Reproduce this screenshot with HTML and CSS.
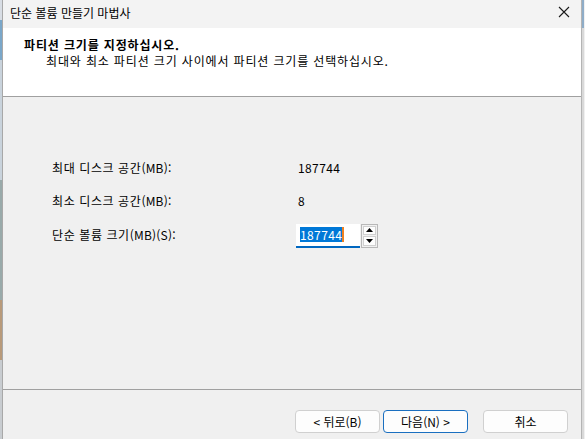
FILE: index.html
```html
<!DOCTYPE html>
<html lang="ko">
<head>
<meta charset="utf-8">
<link rel="stylesheet" href="styles.css">
</head>
<body>
<div class="screen">
  <div class="edge-left"></div>
  <div class="window">
    <div class="titlebar">
      <span class="title">단순 볼륨 만들기 마법사</span>
      <svg class="close" width="12" height="12" viewBox="0 0 12 12"><path d="M1 1 L11 11 M11 1 L1 11" stroke="#1a1a1a" stroke-width="1.1" fill="none"/></svg>
    </div>
    <div class="header">
      <div class="h-title">파티션 크기를 지정하십시오.</div>
      <div class="h-sub">최대와 최소 파티션 크기 사이에서 파티션 크기를 선택하십시오.</div>
    </div>
    <div class="content">
      <div class="grid">
        <div class="label">최대 디스크 공간<span class="lat">(MB):</span></div>
        <div class="value">187744</div>
        <div class="label">최소 디스크 공간<span class="lat">(MB):</span></div>
        <div class="value">8</div>
        <div class="label">단순 볼륨 크기<span class="lat">(MB)(S):</span></div>
        <div class="spin">
          <div class="field"><span class="sel">187744</span><span class="caret"></span></div>
          <div class="arrows">
            <div class="arrow"><svg width="7" height="4" viewBox="0 0 7 4"><path d="M0 4 L3.5 0 L7 4Z" fill="#000"/></svg></div>
            <div class="arrow"><svg width="7" height="4" viewBox="0 0 7 4"><path d="M0 0 L3.5 4 L7 0Z" fill="#000"/></svg></div>
          </div>
        </div>
      </div>
    </div>
    <div class="footer">
      <button class="btn">&lt; 뒤로(B)</button>
      <button class="btn primary">다음(N) &gt;</button>
      <button class="btn cancel">취소</button>
    </div>
  </div>
  <div class="edge-right"></div>
</div>
</body>
</html>
```
FILE: styles.css
```css
* { box-sizing: border-box; }
html, body { margin: 0; padding: 0; }
body {
  width: 585px;
  height: 439px;
  overflow: hidden;
  font-family: "Noto Sans CJK KR", "Noto Sans", sans-serif;
  font-size: 12px;
  color: #000;
  background: #f0f0f0;
}
.screen { display: flex; height: 439px; }
.edge-left {
  width: 2px;
  background: linear-gradient(#d8dde4 0 20px, #7aa7c9 20px 60px, #c9d3dc 60px 180px, #9aa 180px 300px, #b89a7a 300px 360px, #c8ccd0 360px);
}
.window {
  width: 580px;
  display: flex;
  flex-direction: column;
  border-left: 1px solid #a8a8a8;
  border-right: 1px solid #b4b4b4;
}
.edge-right {
  width: 2px;
  background: linear-gradient(#8fadc8 0 28px, #d9d9d9 28px);
}
.titlebar {
  height: 28px;
  background: #f3f3f3;
  display: flex;
  align-items: center;
  justify-content: space-between;
  padding: 0 11px 0 7px;
}
.title { font-size: 12px; line-height: 16px; margin-top: -2px; }
.close { margin-top: -4px; }
.header {
  height: 69px;
  background: #fff;
  border-bottom: 1px solid #a0a0a0;
  padding: 9px 0 0 21px;
  letter-spacing: 0.85px;
}
.h-title { font-weight: bold; line-height: 16px; }
.h-sub { padding-left: 22px; line-height: 16px; }
.content {
  height: 293px;
  padding: 54px 0 0 49px;
  border-bottom: 1px solid #a0a0a0;
}
.grid {
  display: grid;
  grid-template-columns: 246px auto;
  grid-template-rows: 33px 34px 34px;
  align-items: center;
}
.label, .value { line-height: 16px; }
.label { letter-spacing: 0.6px; }
.lat { letter-spacing: 0.2px; }
.value { letter-spacing: 0.4px; }
.spin { display: flex; align-items: stretch; height: 24px; margin-top: 1px; margin-left: -2px; }
.field {
  width: 64px;
  background: #fff;
  border-bottom: 2px solid #0067c0;
  display: flex;
  align-items: center;
  padding-left: 4px;
  letter-spacing: 0.4px;
}
.sel {
  background: #0078d7;
  color: #fff;
  line-height: 15px;
}
.caret { width: 2px; height: 15px; background: #f08020; }
.arrows {
  width: 17px;
  margin-left: 1px;
  border: 1px solid #b8b8b8;
  display: flex;
  flex-direction: column;
  gap: 1px;
  padding: 1px;
  background: #f0f0f0;
}
.arrow {
  flex: 1;
  background: #fdfdfd;
  border: 1px solid #d0d0d0;
  display: flex;
  align-items: center;
  justify-content: center;
}
.footer {
  flex: 1;
  display: flex;
  align-items: flex-start;
  padding: 20px 0 0 292px;
}
.btn {
  width: 85px;
  height: 23px;
  background: #fdfdfd;
  border: 1px solid #d0d0d0;
  border-radius: 4px;
  font-family: inherit;
  font-size: 12px;
  color: #000;
  padding: 0;
  margin-right: 3px;
  line-height: 16px;
}
.btn.primary { border-color: #1a6fc0; margin-right: 15px; }
```
